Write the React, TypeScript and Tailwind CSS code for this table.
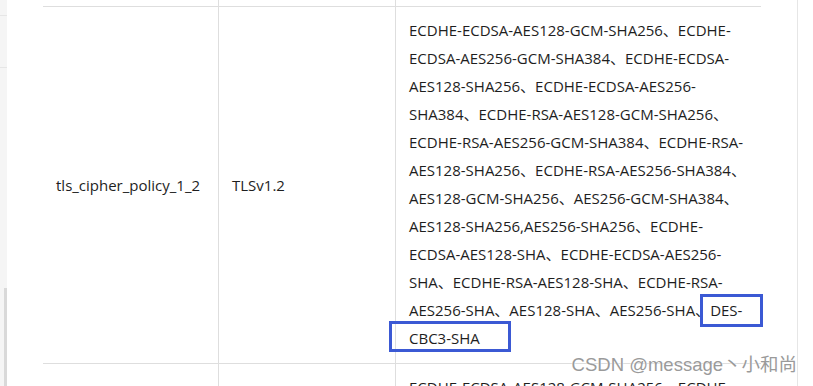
import React from 'react';

const font = "font-['Open_Sans','Noto_Sans_CJK_SC',sans-serif]";

const cipherLines = [
    "ECDHE-ECDSA-AES128-GCM-SHA256、ECDHE-",
    "ECDSA-AES256-GCM-SHA384、ECDHE-ECDSA-",
    "AES128-SHA256、ECDHE-ECDSA-AES256-",
    "SHA384、ECDHE-RSA-AES128-GCM-SHA256、",
    "ECDHE-RSA-AES256-GCM-SHA384、ECDHE-RSA-",
    "AES128-SHA256、ECDHE-RSA-AES256-SHA384、",
    "AES128-GCM-SHA256、AES256-GCM-SHA384、",
    "AES128-SHA256,AES256-SHA256、ECDHE-",
    "ECDSA-AES128-SHA、ECDHE-ECDSA-AES256-",
    "SHA、ECDHE-RSA-AES128-SHA、ECDHE-RSA-",
];

const Marked = ({ children, box }: { children: React.ReactNode, box: string }) => {
    return (
        <span className='relative inline-block leading-[28px]'>
            {children}
            <span className={`absolute border-[3px] border-[#3b59d4] pointer-events-none ${box}`} />
        </span>
    )
}

const App = () => {
    return (
        <div className={`w-[813px] h-[386px] overflow-hidden bg-white flex relative text-[15px] text-[#1e1e1e] ${font}`}>
            {/* left edge of the page */}
            <div className='w-[7px] h-full bg-[#f5f5f5] flex flex-col relative'>
                <div className='h-[15px]' />
                <div className='h-px bg-[#e6e6e6]' />
                <div className='h-[51px]' />
                <div className='h-px bg-[#e6e6e6]' />
                <div className='flex-1' />
                <div className='h-[98px] ml-[4px] bg-[#d9d9d9]' />
            </div>

            <div className='w-[791px] h-full border-r border-[#e6e6e6] pl-[36px]'>
                <div className='grid grid-cols-[176px_177px_365px]'>
                    {/* previous row, cut off */}
                    <div className='h-[7px] border-r border-b border-[#dedede]' />
                    <div className='h-[7px] border-r border-b border-[#dedede]' />
                    <div className='h-[7px] border-b border-[#dedede]' />

                    <div className='h-[357px] border-r border-b border-[#dedede] flex items-center pl-[13px]'>
                        tls_cipher_policy_1_2
                    </div>
                    <div className='h-[357px] border-r border-b border-[#dedede] flex items-center pl-[13px]'>
                        TLSv1.2
                    </div>
                    <div className='h-[357px] border-b border-[#dedede] pl-[13px] pt-[9px] leading-[28px] whitespace-nowrap'>
                        {cipherLines.map((line, index) => <div key={index}>{line}</div>)}
                        <div>
                            AES256-SHA、AES128-SHA、AES256-SHA、
                            <Marked box='-left-[10px] -right-[21px] -top-[2px] -bottom-[3px]'>DES-</Marked>
                        </div>
                        <div>
                            <Marked box='-left-[20px] -right-[31px] -top-[3px] bottom-0'>CBC3-SHA</Marked>
                        </div>
                    </div>

                    {/* next row */}
                    <div className='h-[40px] border-r border-[#dedede]' />
                    <div className='h-[40px] border-r border-[#dedede]' />
                    <div className='h-[40px] pl-[13px] pt-[9px] leading-[28px] whitespace-nowrap'>
                        ECDHE-ECDSA-AES128-GCM-SHA256、ECDHE-
                    </div>
                </div>
            </div>

            <div className="absolute right-[16px] top-[354px] text-[18.5px] leading-[22px] text-[#9a9a9a] font-['Liberation_Sans','Noto_Sans_CJK_SC',sans-serif] [text-shadow:0_0_2px_#fff,0_0_1px_#fff]">
                CSDN @message丶小和尚
            </div>
        </div>
    )
}

export default App
